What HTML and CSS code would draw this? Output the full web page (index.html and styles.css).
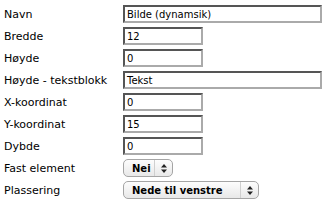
FILE: index.html
```html
<!DOCTYPE html>
<html>
<head>
<meta charset="utf-8">
<link rel="stylesheet" href="styles.css">
</head>
<body>
<div class="form">
  <div class="label">Navn</div>
  <div class="field"><span class="input wide">Bilde (dynamsik)</span></div>
  <div class="label">Bredde</div>
  <div class="field"><span class="input">12</span></div>
  <div class="label">Høyde</div>
  <div class="field"><span class="input">0</span></div>
  <div class="label">Høyde - tekstblokk</div>
  <div class="field"><span class="input wide">Tekst</span></div>
  <div class="label">X-koordinat</div>
  <div class="field"><span class="input">0</span></div>
  <div class="label">Y-koordinat</div>
  <div class="field"><span class="input">15</span></div>
  <div class="label">Dybde</div>
  <div class="field"><span class="input">0</span></div>
  <div class="label">Fast element</div>
  <div class="field"><span class="select small"><span class="val">Nei</span><span class="arrows"><svg width="6" height="9" viewBox="0 0 6 9"><path d="M3 0 L6 3.5 H0 Z M3 9 L0 5.5 H6 Z" fill="#222"/></svg></span></span></div>
  <div class="label">Plassering</div>
  <div class="field"><span class="select big"><span class="val">Nede til venstre</span><span class="arrows"><svg width="6" height="9" viewBox="0 0 6 9"><path d="M3 0 L6 3.5 H0 Z M3 9 L0 5.5 H6 Z" fill="#222"/></svg></span></span></div>
</div>
</body>
</html>
```
FILE: styles.css
```css
html, body { margin: 0; padding: 0; background: #fff; }
body {
  font-family: "DejaVu Sans", Verdana, sans-serif;
  font-size: 11px;
  color: #000;
}
.form {
  display: grid;
  grid-template-columns: 119px 1fr;
  grid-auto-rows: 22px;
  padding: 5px 0 0 4px;
}
.label {
  display: flex;
  align-items: center;
  height: 18px;
}
.field { display: flex; align-items: flex-start; }
.input {
  box-sizing: border-box;
  display: flex;
  align-items: center;
  width: 80px;
  height: 18px;
  padding-left: 2px;
  border-style: solid;
  border-width: 2px;
  border-color: #555 #aaa #aaa #555;
  background: #fff;
  font-size: 10px;
}
.input.wide { width: 199px; }
.select {
  box-sizing: border-box;
  display: flex;
  align-items: center;
  height: 18px;
  border: 1px solid #a5a5a5;
  border-radius: 5px;
  background: linear-gradient(#fdfdfd, #e8e8e8);
  font-weight: bold;
  font-size: 10px;
}
.select .val { flex: 1; padding-left: 8px; }
.select .arrows {
  display: flex;
  align-items: center;
  justify-content: center;
  width: 17px;
  height: 100%;
  border-left: 1px solid #cfcfcf;
}
.select.small { width: 50px; }
.select.big { width: 136px; }
```
